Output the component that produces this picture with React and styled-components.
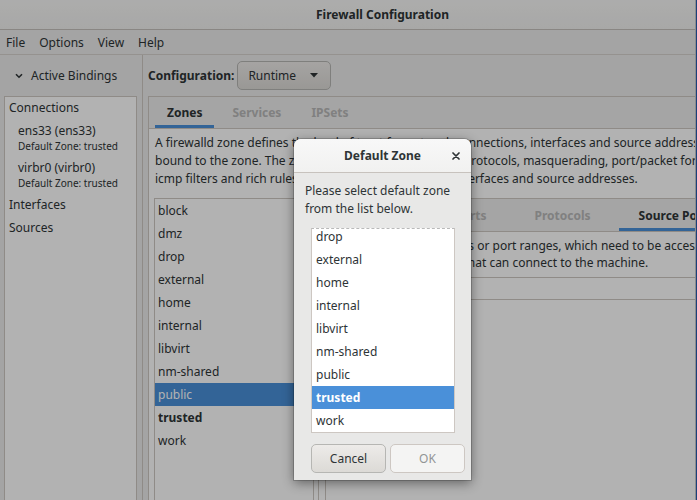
import React from "react";
import styled, { createGlobalStyle } from "styled-components";

const zones = ["block", "dmz", "drop", "external", "home", "internal", "libvirt", "nm-shared", "public", "trusted", "work"];

const GlobalStyle = createGlobalStyle`
  html, body {
    margin: 0;
    padding: 0;
    background: #1b3f7a;
  }
  body {
    font-family: "Noto Sans", "DejaVu Sans", sans-serif;
    font-size: 12px;
    color: #2e3436;
  }
`;

const Screen = styled.div`
  width: 697px;
  height: 500px;
  display: flex;
  overflow: hidden;
  background: #1b3f7a;
`;

const Window = styled.div`
  position: relative;
  width: 695px;
  height: 500px;
  display: flex;
  flex-direction: column;
  background: #ebebeb;
  border-right: 1px solid #8c8c8c;
  overflow: hidden;
`;

const TitleBar = styled.div`
  height: 29px;
  display: flex;
  align-items: center;
  justify-content: center;
  padding-left: 70px;
  background: linear-gradient(#f7f7f6, #f1f1f0);
  border-bottom: 1px solid #c4c0bc;
  font-weight: 700;
`;

const MenuBar = styled.div`
  height: 24px;
  display: flex;
  align-items: center;
  padding-left: 0;
  border-bottom: 1px solid #d6d1cd;
`;

const MenuItem = styled.span`
  padding: 0 7px;
  &:first-child {
    padding-left: 6px;
  }
`;

const Main = styled.div`
  flex: 1;
  display: flex;
  min-height: 0;
`;

const Sidebar = styled.div`
  width: 143px;
  box-sizing: border-box;
  padding: 0 5px 0 4px;
  border-right: 1px solid #cdc7c2;
  display: flex;
  flex-direction: column;
`;

const SideHeader = styled.div`
  height: 41px;
  display: flex;
  align-items: center;
  gap: 8px;
  padding-left: 11px;
`;

const SideBox = styled.div`
  flex: 1;
  background: #fff;
  border: 1px solid #cdc7c2;
  border-bottom: none;
`;

const GroupRow = styled.div`
  height: ${(p) => (p.$tall ? 23 : 22)}px;
  line-height: ${(p) => (p.$tall ? 23 : 22)}px;
  padding-left: 4px;
`;

const Conn = styled.div`
  padding: 3px 0 3px 13px;
`;

const ConnName = styled.div`
  line-height: 17px;
`;

const ConnZone = styled.div`
  font-size: 10px;
  line-height: 14px;
`;

const RightCol = styled.div`
  flex: 1;
  min-width: 0;
  display: flex;
  flex-direction: column;
  padding-left: 5px;
`;

const Toolbar = styled.div`
  height: 41px;
  display: flex;
  align-items: center;
  gap: 3px;
`;

const ConfigLabel = styled.span`
  font-weight: 700;
`;

const Combo = styled.div`
  width: 94px;
  height: 29px;
  box-sizing: border-box;
  display: flex;
  align-items: center;
  justify-content: space-between;
  padding: 0 12px 0 10px;
  border: 1px solid #b6b6b3;
  border-radius: 5px;
  background: linear-gradient(#edebe9, #dcdad6);
`;

const Notebook = styled.div`
  flex: 1;
  min-height: 0;
  display: flex;
  flex-direction: column;
  background: #fff;
  border: 1px solid #cdc7c2;
  border-right: none;
  border-bottom: none;
`;

const TabBar = styled.div`
  height: ${(p) => (p.$inner ? 32 : 31)}px;
  flex-shrink: 0;
  display: flex;
  gap: ${(p) => (p.$inner ? 8 : 6)}px;
  padding-left: ${(p) => (p.$inner ? 12 : 6)}px;
  background: #ececec;
  border-bottom: 1px solid #cdc7c2;
  overflow: hidden;
`;

const Tab = styled.div`
  display: flex;
  align-items: center;
  flex-shrink: 0;
  padding: 0 ${(p) => (p.$inner ? 20 : 12)}px;
  font-weight: 700;
  color: ${(p) => (p.$active ? "#2e3436" : "#b8b8b8")};
  box-shadow: ${(p) => (p.$active ? "inset 0 -3px #4a90d9" : "none")};
`;

const Page = styled.div`
  flex: 1;
  min-height: 0;
  display: flex;
  flex-direction: column;
  padding: 5px 0 0 5px;
  overflow: hidden;
`;

const Description = styled.div`
  white-space: nowrap;
  line-height: 18px;
  padding-left: 1px;
  margin-bottom: 10px;
`;

const PageBody = styled.div`
  flex: 1;
  min-height: 0;
  display: flex;
`;

const ZoneList = styled.div`
  width: 160px;
  box-sizing: border-box;
  flex-shrink: 0;
  border: 1px solid #cdc7c2;
  border-bottom: none;
`;

const ZoneRow = styled.div`
  height: 23px;
  line-height: 23px;
  padding-left: 3px;
  font-weight: ${(p) => (p.$bold ? 700 : 400)};
  background: ${(p) => (p.$selected ? "#4a90d9" : "transparent")};
  color: ${(p) => (p.$selected ? "#fff" : "inherit")};
`;

const PaneHandle = styled.div`
  width: 11px;
  flex-shrink: 0;
  background: linear-gradient(to right, transparent 4px, #cdc7c2 4px, #cdc7c2 5px, transparent 5px);
`;

const InnerNotebook = styled.div`
  flex: 1;
  min-width: 0;
  display: flex;
  flex-direction: column;
  border: 1px solid #cdc7c2;
  border-right: none;
  border-bottom: none;
`;

const InnerPage = styled.div`
  padding: 5px 0 0 17px;
  white-space: nowrap;
  line-height: 17px;
`;

const Frame = styled.div`
  margin: 6px 0 0 -17px;
  height: 21px;
  border-top: 1px solid #cdc7c2;
  border-bottom: 1px solid #cdc7c2;
`;

const Dim = styled.div`
  position: absolute;
  inset: 0;
  background: rgba(0, 0, 0, 0.3);
  z-index: 1;
`;

const Dialog = styled.div`
  position: absolute;
  left: 294px;
  top: 139px;
  width: 177px;
  height: 341px;
  z-index: 2;
  display: flex;
  flex-direction: column;
  background: #e8e8e7;
  border-radius: 7px 7px 0 0;
  box-shadow: 0 3px 12px rgba(0, 0, 0, 0.45), 0 0 0 1px rgba(0, 0, 0, 0.18);
  overflow: hidden;
`;

const DialogHeader = styled.div`
  height: 33px;
  flex-shrink: 0;
  display: grid;
  grid-template-columns: 30px 1fr 30px;
  align-items: center;
  background: linear-gradient(#f8f8f8, #f1f1f0);
  border-bottom: 1px solid #c7c2bd;
`;

const DialogTitle = styled.div`
  text-align: center;
  font-weight: 700;
`;

const CloseButton = styled.div`
  display: flex;
  justify-content: center;
  align-items: center;
`;

const DialogBody = styled.div`
  flex: 1;
  display: flex;
  flex-direction: column;
  padding: 9px 6px 6px 11px;
`;

const Prompt = styled.div`
  line-height: 18px;
`;

const PickList = styled.div`
  margin: 10px 0 0 6px;
  width: 144px;
  height: 205px;
  box-sizing: border-box;
  background: #fff;
  border: 1px solid #cdc7c2;
  border-top: 1px dashed #b9b9b9;
  overflow: hidden;
`;

const PickScroll = styled.div`
  margin-top: -50px;
`;

const PickRow = styled.div`
  height: 23px;
  line-height: 23px;
  padding-left: 4px;
  font-weight: ${(p) => (p.$selected ? 700 : 400)};
  background: ${(p) => (p.$selected ? "#4a90d9" : "transparent")};
  color: ${(p) => (p.$selected ? "#fff" : "inherit")};
`;

const ButtonRow = styled.div`
  display: flex;
  gap: 4px;
  margin: 11px 0 0 6px;
`;

const Button = styled.div`
  width: 75px;
  height: 29px;
  box-sizing: border-box;
  display: flex;
  align-items: center;
  justify-content: center;
  border-radius: 5px;
  border: 1px solid ${(p) => (p.$disabled ? "#cdc7c2" : "#b6b6b3")};
  background: ${(p) => (p.$disabled ? "#f4f4f3" : "linear-gradient(#edebe9, #dcdad6)")};
  color: ${(p) => (p.$disabled ? "#929595" : "#2e3436")};
`;

const Chevron = () => (
  <svg width="8" height="6" viewBox="0 0 8 6">
    <polyline points="1,1.2 4,4.2 7,1.2" fill="none" stroke="#2e3436" strokeWidth="1.6" />
  </svg>
);

const DropArrow = () => (
  <svg width="8" height="5" viewBox="0 0 8 5">
    <polygon points="0,0 8,0 4,4.5" fill="#2e3436" />
  </svg>
);

const CloseIcon = () => (
  <svg width="8" height="8" viewBox="0 0 8 8">
    <path d="M1 1 L7 7 M7 1 L1 7" stroke="#2e3436" strokeWidth="1.7" strokeLinecap="round" />
  </svg>
);

const App = () => {
  return (
    <Screen>
      <GlobalStyle />
      <Window>
        <TitleBar>Firewall Configuration</TitleBar>
        <MenuBar>
          <MenuItem>File</MenuItem>
          <MenuItem>Options</MenuItem>
          <MenuItem>View</MenuItem>
          <MenuItem>Help</MenuItem>
        </MenuBar>
        <Main>
          <Sidebar>
            <SideHeader>
              <Chevron />
              <span>Active Bindings</span>
            </SideHeader>
            <SideBox>
              <GroupRow>Connections</GroupRow>
              <Conn>
                <ConnName>ens33 (ens33)</ConnName>
                <ConnZone>Default Zone: trusted</ConnZone>
              </Conn>
              <Conn>
                <ConnName>virbr0 (virbr0)</ConnName>
                <ConnZone>Default Zone: trusted</ConnZone>
              </Conn>
              <GroupRow $tall>Interfaces</GroupRow>
              <GroupRow $tall>Sources</GroupRow>
            </SideBox>
          </Sidebar>
          <RightCol>
            <Toolbar>
              <ConfigLabel>Configuration:</ConfigLabel>
              <Combo>
                <span>Runtime</span>
                <DropArrow />
              </Combo>
            </Toolbar>
            <Notebook>
              <TabBar>
                <Tab $active>Zones</Tab>
                <Tab>Services</Tab>
                <Tab>IPSets</Tab>
              </TabBar>
              <Page>
                <Description>
                  A firewalld zone defines the level of trust for network connections, interfaces and source addresses
                  <br />
                  bound to the zone. The zone combines services, ports, protocols, masquerading, port/packet forwarding,
                  <br />
                  icmp filters and rich rules. The zone can be bound to interfaces and source addresses.
                </Description>
                <PageBody>
                  <ZoneList>
                    {zones.map((z) => (
                      <ZoneRow key={z} $selected={z === "public"} $bold={z === "trusted"}>
                        {z}
                      </ZoneRow>
                    ))}
                  </ZoneList>
                  <PaneHandle />
                  <InnerNotebook>
                    <TabBar $inner>
                      <Tab $inner>Services</Tab>
                      <Tab $inner>Ports</Tab>
                      <Tab $inner>Protocols</Tab>
                      <Tab $inner $active>Source Ports</Tab>
                      <Tab $inner>Masquerading</Tab>
                    </TabBar>
                    <InnerPage>
                      Additional source ports or port ranges, which need to be accessible
                      <br />
                      all hosts or networks that can connect to the machine.
                      <Frame />
                    </InnerPage>
                  </InnerNotebook>
                </PageBody>
              </Page>
            </Notebook>
          </RightCol>
        </Main>
        <Dim />
        <Dialog>
          <DialogHeader>
            <span />
            <DialogTitle>Default Zone</DialogTitle>
            <CloseButton>
              <CloseIcon />
            </CloseButton>
          </DialogHeader>
          <DialogBody>
            <Prompt>
              Please select default zone
              <br />
              from the list below.
            </Prompt>
            <PickList>
              <PickScroll>
                {zones.map((z) => (
                  <PickRow key={z} $selected={z === "trusted"}>
                    {z}
                  </PickRow>
                ))}
              </PickScroll>
            </PickList>
            <ButtonRow>
              <Button>Cancel</Button>
              <Button $disabled>OK</Button>
            </ButtonRow>
          </DialogBody>
        </Dialog>
      </Window>
    </Screen>
  );
};

export default App;
